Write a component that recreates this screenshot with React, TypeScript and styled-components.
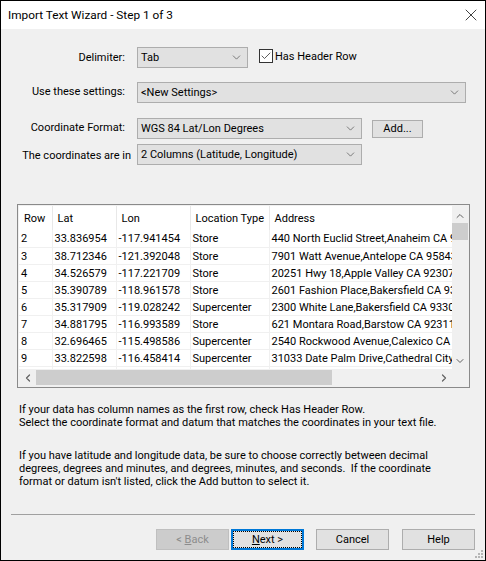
import styled, { createGlobalStyle } from "styled-components";
import { ChevronDown, ChevronLeft, ChevronRight, ChevronUp, Check, X } from "lucide-react";

const GlobalStyle = createGlobalStyle`
  html, body {
    margin: 0;
    padding: 0;
    background: #f0f0f0;
  }
  * {
    box-sizing: border-box;
  }
`;

const Dialog = styled.div`
  position: relative;
  width: 486px;
  height: 561px;
  display: flex;
  flex-direction: column;
  border: 1px solid #000;
  background: #f0f0f0;
  color: #000;
  font-family: Roboto, "Open Sans", sans-serif;
  font-size: 11px;
  overflow: hidden;
`;

const TitleBar = styled.div`
  height: 28px;
  flex: none;
  display: flex;
  align-items: center;
  justify-content: space-between;
  padding: 0 4px 1px 7px;
  background: #fff;
  font-size: 11.8px;
`;

const Form = styled.div`
  display: grid;
  grid-template-columns: 130px 225px 1fr;
  column-gap: 6px;
  padding: 18px 19px 0 0;
  align-items: center;
`;

const Label = styled.div<{ $inset?: number; $gapTop?: number; $lift?: number; $drop?: number }>`
  text-align: right;
  padding-right: ${(p) => p.$inset ?? 6}px;
  padding-bottom: ${(p) => p.$lift ?? 0}px;
  padding-top: ${(p) => p.$drop ?? 0}px;
  margin-top: ${(p) => p.$gapTop ?? 0}px;
  white-space: nowrap;
`;

const Combo = styled.div<{ $width?: number; $wide?: boolean; $gapTop?: number }>`
  height: 21px;
  width: ${(p) => (p.$width ? `${p.$width}px` : "100%")};
  grid-column: ${(p) => (p.$wide ? "2 / 4" : "auto")};
  margin-top: ${(p) => p.$gapTop ?? 0}px;
  display: flex;
  align-items: center;
  justify-content: space-between;
  padding: 0 4px 0 3px;
  background: #e1e1e1;
  border: 1px solid #adadad;
`;

const Trailing = styled.div<{ $gapTop?: number }>`
  display: flex;
  align-items: center;
  margin-top: ${(p) => p.$gapTop ?? 0}px;
`;

const DelimiterCell = styled.div`
  grid-column: 2 / 4;
  display: flex;
  align-items: center;
  gap: 11px;
`;

const CheckRow = styled.label`
  display: flex;
  align-items: center;
  gap: 2px;
  margin-top: -3px;
`;

const CheckBox = styled.span`
  width: 14px;
  height: 14px;
  display: flex;
  align-items: center;
  justify-content: center;
  border: 1px solid #333;
  background: #fff;
`;

const SmallButton = styled.button`
  width: 51px;
  height: 18px;
  margin-left: 4px;
  padding: 0;
  background: #e1e1e1;
  border: 1px solid #adadad;
  font: inherit;
  color: #000;
`;

const GridFrame = styled.div`
  margin: 39px 15px 0 16px;
  height: 184px;
  flex: none;
  display: grid;
  grid-template-columns: 1fr 16px;
  grid-template-rows: 1fr 17px;
  padding: 1px;
  border: 1px solid #8a8a8a;
  background: #f0f0f0;
`;

const Viewport = styled.div`
  overflow: hidden;
  background: #fff;
`;

const Table = styled.table`
  border-collapse: collapse;
  table-layout: fixed;
  width: 433px;
  white-space: nowrap;
`;

const HeadCell = styled.th<{ $width: number }>`
  width: ${(p) => p.$width}px;
  height: 24px;
  padding: 1px 0 0 5px;
  font-weight: 400;
  text-align: left;
  border-right: 1px solid #e8e8e8;
  overflow: hidden;
`;

const Cell = styled.td`
  height: 17px;
  padding: 2px 0 0 2px;
  border-right: 1px solid #f0f0f0;
  border-bottom: 1px solid #f0f0f0;
  overflow: hidden;
  line-height: 14px;
`;

const VScroll = styled.div`
  display: flex;
  flex-direction: column;
  align-items: center;
  justify-content: space-between;
  background: #f0f0f0;
  padding: 4px 0 2px;
  position: relative;
`;

const VThumb = styled.div`
  position: absolute;
  top: 17px;
  left: 0;
  width: 16px;
  height: 17px;
  background: #cdcdcd;
`;

const HScroll = styled.div`
  display: flex;
  align-items: center;
  height: 17px;
`;

const HArrow = styled.div`
  width: 17px;
  flex: none;
  display: flex;
  justify-content: center;
`;

const HTrack = styled.div`
  flex: 1;
  height: 15px;
`;

const HThumb = styled.div`
  width: 296px;
  height: 100%;
  background: #cdcdcd;
`;

const Corner = styled.div`
  background: #f0f0f0;
`;

const Help = styled.p<{ $top: number }>`
  margin: ${(p) => p.$top}px 16px 0 18px;
  line-height: 13px;
`;

const Divider = styled.div`
  margin: auto 10px 0;
  height: 1px;
  background: #a0a0a0;
  flex: none;
`;

const ButtonRow = styled.div`
  display: flex;
  justify-content: flex-end;
  padding: 14px 10px 10px;
  flex: none;
`;

const DialogButton = styled.button<{ $left?: number; $focused?: boolean }>`
  width: 73px;
  height: 21px;
  margin-left: ${(p) => p.$left ?? 0}px;
  padding: 0;
  font: inherit;
  color: #000;
  background: #e1e1e1;
  border: 1px solid #adadad;
  &:disabled {
    background: #cccccc;
    border-color: #bfbfbf;
    color: #8c8c8c;
  }
  ${(p) =>
    p.$focused &&
    `
    border: 2px solid #0078d7;
    outline: 1px dotted #000;
    outline-offset: -3px;
  `}
`;

const Underlined = styled.span`
  text-decoration: underline;
`;

const Grip = styled.svg`
  position: absolute;
  right: 1px;
  bottom: 1px;
`;

const columns = [
  { name: "Row", width: 33 },
  { name: "Lat", width: 64 },
  { name: "Lon", width: 74 },
  { name: "Location Type", width: 79 },
  { name: "Address", width: 183 },
];

const rows = [
  ["2", "33.836954", "-117.941454", "Store", "440 North Euclid Street,Anaheim CA 92801"],
  ["3", "38.712346", "-121.392048", "Store", "7901 Watt Avenue,Antelope CA 95843"],
  ["4", "34.526579", "-117.221709", "Store", "20251 Hwy 18,Apple Valley CA 92307"],
  ["5", "35.390789", "-118.961578", "Store", "2601 Fashion Place,Bakersfield CA 93306"],
  ["6", "35.317909", "-119.028242", "Supercenter", "2300 White Lane,Bakersfield CA 93304"],
  ["7", "34.881795", "-116.993589", "Store", "621 Montara Road,Barstow CA 92311"],
  ["8", "32.696465", "-115.498586", "Supercenter", "2540 Rockwood Avenue,Calexico CA 92231"],
  ["9", "33.822598", "-116.458414", "Supercenter", "31033 Date Palm Drive,Cathedral City CA"],
  ["", "", "", "", ""],
];

export default function App() {
  return (
    <>
      <GlobalStyle />
      <Dialog>
        <TitleBar>
          Import Text Wizard - Step 1 of 3
          <X size={20} strokeWidth={0.9} color="#000" />
        </TitleBar>
        <Form>
          <Label>Delimiter:</Label>
          <DelimiterCell>
            <Combo $width={111}>
              Tab
              <ChevronDown size={13} strokeWidth={1.2} color="#444" />
            </Combo>
            <CheckRow>
              <CheckBox>
                <Check size={12} strokeWidth={1.6} color="#333" />
              </CheckBox>
              Has Header Row
            </CheckRow>
          </DelimiterCell>

          <Label $gapTop={14} $lift={3}>Use these settings:</Label>
          <Combo $wide $gapTop={14}>
            &lt;New Settings&gt;
            <ChevronDown size={13} strokeWidth={1.2} color="#444" />
          </Combo>

          <Label $gapTop={15} $lift={3}>Coordinate Format:</Label>
          <Combo $gapTop={15}>
            WGS 84 Lat/Lon Degrees
            <ChevronDown size={13} strokeWidth={1.2} color="#444" />
          </Combo>
          <Trailing $gapTop={15}>
            <SmallButton>Add...</SmallButton>
          </Trailing>

          <Label $inset={0} $gapTop={5} $drop={2}>The coordinates are in</Label>
          <Combo $gapTop={5}>
            2 Columns (Latitude, Longitude)
            <ChevronDown size={13} strokeWidth={1.2} color="#444" />
          </Combo>
        </Form>

        <GridFrame>
          <Viewport>
            <Table>
              <thead>
                <tr>
                  {columns.map((c) => (
                    <HeadCell key={c.name} $width={c.width}>
                      {c.name}
                    </HeadCell>
                  ))}
                </tr>
              </thead>
              <tbody>
                {rows.map((row, i) => (
                  <tr key={i}>
                    {row.map((value, j) => (
                      <Cell key={j}>{value}</Cell>
                    ))}
                  </tr>
                ))}
              </tbody>
            </Table>
          </Viewport>
          <VScroll>
            <ChevronUp size={12} strokeWidth={2} color="#606060" />
            <VThumb />
            <ChevronDown size={12} strokeWidth={2} color="#606060" />
          </VScroll>
          <HScroll>
            <HArrow>
              <ChevronLeft size={12} strokeWidth={2.4} color="#606060" />
            </HArrow>
            <HTrack>
              <HThumb />
            </HTrack>
            <HArrow>
              <ChevronRight size={12} strokeWidth={2.4} color="#606060" />
            </HArrow>
          </HScroll>
          <Corner />
        </GridFrame>

        <Help $top={15}>
          If your data has column names as the first row, check Has Header Row.
          <br />
          Select the coordinate format and datum that matches the coordinates in your text file.
        </Help>
        <Help $top={20}>
          If you have latitude and longitude data, be sure to choose correctly between decimal
          <br />
          degrees, degrees and minutes, and degrees, minutes, and seconds.&nbsp; If the coordinate
          <br />
          format or datum isn't listed, click the Add button to select it.
        </Help>

        <Divider />
        <ButtonRow>
          <DialogButton disabled>
            &lt; <Underlined>B</Underlined>ack
          </DialogButton>
          <DialogButton $left={2} $focused>
            <Underlined>N</Underlined>ext &gt;
          </DialogButton>
          <DialogButton $left={12}>Cancel</DialogButton>
          <DialogButton $left={13}>Help</DialogButton>
        </ButtonRow>
        <Grip width="10" height="10" viewBox="0 0 10 10">
          <path d="M7 1h2v2H7zM4 4h2v2H4zM7 4h2v2H7zM1 7h2v2H1zM4 7h2v2H4zM7 7h2v2H7z" fill="#b5b5b5" />
        </Grip>
      </Dialog>
    </>
  );
}
